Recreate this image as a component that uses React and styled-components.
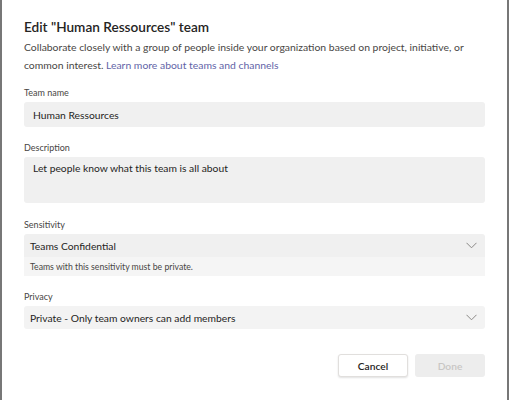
import React from "react";
import styled, { createGlobalStyle } from "styled-components";

const Global = createGlobalStyle`
  html, body { margin: 0; padding: 0; background: #fff; }
  body { font-family: "Lato", "Open Sans", sans-serif; }
  * { box-sizing: border-box; }
`;

const Frame = styled.div`
  width: 509px;
  height: 400px;
  border-left: 2px solid #777;
  border-right: 2px solid #777;
  padding: 17px 22px 0 22px;
  background: #fff;
`;

const Title = styled.h1`
  margin: 0;
  font-size: 13.6px;
  font-weight: 600;
  color: #252423;
  line-height: 20px;
`;

const Intro = styled.p`
  margin: 1px 0 0;
  font-size: 10.4px;
  line-height: 18px;
  color: #484644;
`;

const Link = styled.a`
  color: #6264a7;
  text-decoration: none;
`;

const Field = styled.div`
  margin-top: ${(p) => p.$top}px;
  display: flex;
  flex-direction: column;
`;

const Label = styled.label`
  font-size: 9px;
  color: #484644;
  line-height: 14px;
  margin-bottom: 2px;
`;

const Input = styled.div`
  height: ${(p) => p.$h}px;
  background: #f0f0f0;
  border-radius: 3px;
  padding: ${(p) => (p.$area ? "5px 9px" : "0 9px")};
  display: flex;
  align-items: ${(p) => (p.$area ? "flex-start" : "center")};
  font-size: 10.3px;
  color: #252423;
`;

const Select = styled.div`
  height: 23px;
  background: ${(p) => (p.$light ? "#f3f3f3" : "#f0f0f0")};
  border-radius: ${(p) => (p.$attached ? "3px 3px 0 0" : "3px")};
  padding: 0 8px 0 6px;
  display: flex;
  align-items: center;
  justify-content: space-between;
  font-size: 10.3px;
  color: #252423;
`;

const Helper = styled.div`
  height: 19px;
  background: #f5f5f5;
  padding: 0 6px;
  display: flex;
  align-items: center;
  font-size: 8.7px;
  color: #484644;
`;

const Actions = styled.div`
  margin-top: 25px;
  display: flex;
  justify-content: flex-end;
  gap: 7px;
`;

const Button = styled.button`
  width: 70px;
  height: 23px;
  border-radius: 3px;
  font-family: inherit;
  font-size: 10.2px;
  font-weight: 600;
  border: ${(p) => (p.$primary ? "none" : "1px solid #e1dfdd")};
  background: ${(p) => (p.$primary ? "#ededed" : "#fff")};
  color: ${(p) => (p.$primary ? "#c8c6c4" : "#252423")};
  box-shadow: ${(p) => (p.$primary ? "none" : "0 1px 2px rgba(0,0,0,0.12)")};
  padding: 0;
`;

const Chevron = () => (
  <svg width="11" height="7" viewBox="0 0 11 7" fill="none">
    <path d="M0.5 0.8 L5.5 5.8 L10.5 0.8" stroke="#8a8886" strokeWidth="1" />
  </svg>
);

export default function App() {
  return (
    <>
      <Global />
      <Frame>
        <Title>Edit "Human Ressources" team</Title>
        <Intro>
          Collaborate closely with a group of people inside your organization based on project, initiative, or
          common interest. <Link href="#">Learn more about teams and channels</Link>
        </Intro>
        <Field $top={12}>
          <Label>Team name</Label>
          <Input $h={25}>Human Ressources</Input>
        </Field>
        <Field $top={14}>
          <Label>Description</Label>
          <Input $h={46} $area>Let people know what this team is all about</Input>
        </Field>
        <Field $top={15}>
          <Label>Sensitivity</Label>
          <Select $attached>
            Teams Confidential
            <Chevron />
          </Select>
          <Helper>Teams with this sensitivity must be private.</Helper>
        </Field>
        <Field $top={14}>
          <Label>Privacy</Label>
          <Select $light>
            Private - Only team owners can add members
            <Chevron />
          </Select>
        </Field>
        <Actions>
          <Button>Cancel</Button>
          <Button $primary disabled>Done</Button>
        </Actions>
      </Frame>
    </>
  );
}
